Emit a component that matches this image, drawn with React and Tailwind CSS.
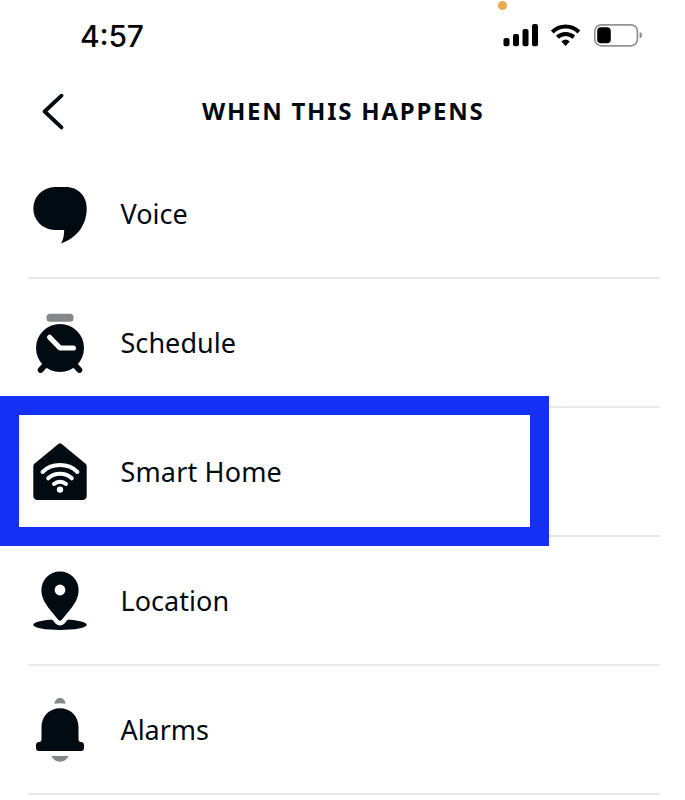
const INK = '#020a12';
const GRAY = '#85878b';

function VoiceIcon() {
  return <path fill={INK} d="M26.8 38H38C50 38 58.7 47 58.7 59C58.7 76 49.5 88.5 33 94.5C34.8 91.5 36.2 87 36.2 81H26.8A21.5 21.5 0 0 1 26.8 38Z" />;
}

function ScheduleIcon() {
  return (
    <>
      <rect x="18.5" y="35.7" width="27" height="8" rx="3.5" fill={GRAY} />
      <path d="M12.6 92L19 85M51.4 92L45 85" stroke={INK} strokeWidth="5.8" strokeLinecap="round" />
      <circle cx="32" cy="70" r="24" fill={INK} />
      <path d="M21.6 59.3L32 70H45.4" fill="none" stroke="#fff" strokeWidth="5.2" strokeLinecap="round" strokeLinejoin="round" />
    </>
  );
}

function HomeIcon() {
  return (
    <>
      <path fill={INK} d="M30.6 36.7Q32 35.6 33.4 36.7L57.3 56.4Q58.7 57.6 58.7 59.4V88.6Q58.7 93 54.3 93H9.7Q5.3 93 5.3 88.6V59.4Q5.3 57.6 6.7 56.4Z" />
      <g fill="none" stroke="#fff" strokeWidth="4" strokeLinecap="round">
        <path d="M14.6 65C23.8 55.8 40.2 55.8 49.4 65" />
        <path d="M20.2 71.3C26.4 65.2 37.6 65.2 43.8 71.3" />
        <path d="M26 76.9C29.4 73.9 34.6 73.9 38 76.9" />
      </g>
      <circle cx="32" cy="82.6" r="3.2" fill="#fff" />
    </>
  );
}

function LocationIcon() {
  const pin = 'M32 35.4C21.4 35.4 13.4 43.6 13.4 54C13.4 62.3 17.8 68.3 22 73.8L30.4 84Q32 85.4 33.6 84L42 73.8C46.2 68.3 50.6 62.3 50.6 54C50.6 43.6 42.6 35.4 32 35.4Z';
  return (
    <>
      <ellipse cx="32" cy="88.7" rx="26.8" ry="5.3" fill={INK} />
      <path d={pin} fill="#fff" stroke="#fff" strokeWidth="9" strokeLinejoin="round" />
      <path d={pin} fill={INK} />
      <circle cx="32" cy="54" r="5.4" fill="#fff" />
    </>
  );
}

function AlarmIcon() {
  return (
    <>
      <path fill={GRAY} d="M26.5 38.8C26.5 35.5 29 33 32 33S37.5 35.5 37.5 38.8Q32 37.8 26.5 38.8Z" />
      <path fill={INK} d="M13.5 62C13.5 51 21.5 43.2 32 43.2S50.5 51 50.5 62V74Q50.5 77 53 77Q56 77.3 56 80V83.6Q56 86 53.6 86H10.4Q8 86 8 83.6V80Q8 77.3 11 77Q13.5 77 13.5 74Z" />
      <path fill={GRAY} d="M23.5 91H40.5C39 94.5 36 96.7 32 96.7S25 94.5 23.5 91Z" />
    </>
  );
}

const rows = [
  { label: 'Voice', Icon: VoiceIcon, tracking: 'tracking-[0px]' },
  { label: 'Schedule', Icon: ScheduleIcon, tracking: 'tracking-[0.05px]' },
  { label: 'Smart Home', Icon: HomeIcon, tracking: 'tracking-[0.15px]' },
  { label: 'Location', Icon: LocationIcon, tracking: 'tracking-[0.05px]' },
  { label: 'Alarms', Icon: AlarmIcon, tracking: 'tracking-[-0.05px]' },
];

function StatusBar() {
  return (
    <div className="relative flex h-[72px] items-center justify-between pr-[43px] pl-[80px]">
      <span className="absolute top-[1px] left-[498px] size-[9px] rounded-full bg-[#eba94f]" />
      <time className="pb-px font-['Inter','Liberation_Sans',sans-serif] text-[30px] leading-[70px] font-medium tracking-[-0.2px] text-black">4<span className="inline-block -translate-y-[2px]">:</span>57</time>
      <svg className="h-[32px] w-[140px]" viewBox="502 20 140 32">
        <rect x="503.5" y="38" width="6" height="8.3" rx="2" />
        <rect x="513" y="34" width="6" height="12.3" rx="2" />
        <rect x="522.5" y="29" width="6" height="17.3" rx="2" />
        <rect x="532" y="24" width="6" height="22.3" rx="2" />
        <g fill="none" stroke="#000" strokeWidth="4">
          <path d="M552.3 32C559.5 24.6 571.7 24.6 578.9 32" />
          <path d="M557.4 37.2C562 33 569.2 33 573.8 37.2" />
        </g>
        <path d="M561.4 41.4Q565.6 37.8 569.8 41.4L565.6 46Z" />
        <rect x="594.8" y="24.8" width="42.6" height="21" rx="6.5" fill="none" stroke="#929292" strokeWidth="1.7" />
        <rect x="597.2" y="27.3" width="13.6" height="16" rx="3.8" />
        <path d="M639.6 32Q642.3 32.8 642.3 35.3T639.6 38.6Z" fill="#929292" />
      </svg>
    </div>
  );
}

export default function App() {
  return (
    <main className="relative h-[800px] w-[685px] overflow-hidden bg-white font-['Noto_Sans','Open_Sans',sans-serif] text-[#020a12]">
      <StatusBar />
      <header className="flex h-[77px] items-center pl-[40px]">
        <svg className="h-[40px] w-[28px]" viewBox="40 91 28 40">
          <path d="M61.5 95.7L44.6 111.5L61.5 127.4" fill="none" stroke={INK} strokeWidth="3.9" strokeLinecap="round" strokeLinejoin="round" />
        </svg>
        <h1 className="ml-[134px] pt-px text-[24px] leading-[32px] font-bold tracking-[1.75px] whitespace-nowrap">WHEN THIS HAPPENS</h1>
      </header>
      <ul className="mt-px ml-7 w-[632px]">
        {rows.map(({ label, Icon, tracking }) => (
          <li key={label} className="flex h-[129px] items-center border-b-2 border-[#e7e8e9]">
            <svg className="h-[128px] w-[64px] shrink-0 self-start" viewBox="0 1 64 128"><Icon /></svg>
            <span className={`ml-[28.5px] pt-px text-[27px] leading-[38px] whitespace-nowrap ${tracking}`}>{label}</span>
          </li>
        ))}
      </ul>
      <div className="absolute top-[396px] left-0 h-[150px] w-[549px] border-[19px] border-[#1430f5]" />
    </main>
  );
}
